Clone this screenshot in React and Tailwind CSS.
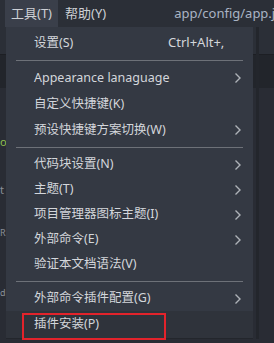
import React from "react";

const font = { fontFamily: '"Noto Sans", "Noto Sans CJK SC", sans-serif' };

function Chevron() {
  return (
    <svg width="8" height="12" viewBox="0 0 8 12" className="absolute right-[11px] top-1/2 -translate-y-1/2">
      <path d="M1.5 1.5 L6 6 L1.5 10.5" fill="none" stroke="#aeb2b8" strokeWidth="1.4" />
    </svg>
  );
}

function Item({ label, shortcut, sub, h = "h-[25px]", extra = "" }) {
  return (
    <div className={`relative flex items-center pl-[28px] pr-[20px] ${h} ${extra}`}>
      <span className="text-[12.5px] text-[#d3d6db] whitespace-nowrap">{label}</span>
      {shortcut && (
        <span className="absolute left-[162px] text-[13px] text-[#d3d6db] whitespace-nowrap">{shortcut}</span>
      )}
      {sub && <Chevron />}
    </div>
  );
}

function Sep() {
  return (
    <div className="flex h-[9px] items-center px-[10px]">
      <div className="h-px w-[227px] bg-[#6d7178]" />
    </div>
  );
}

export default function App() {
  return (
    <div className="relative h-[343px] w-[274px] overflow-hidden bg-[#282b33]" style={font}>
      {/* menubar */}
      <div className="flex h-[27px] items-center overflow-hidden whitespace-nowrap bg-[#2b2f37] text-[13px]">
        <div className="ml-[5px] flex h-full w-[53px] shrink-0 items-center justify-center bg-[#3a3f4a] text-[#cdd0d5]">
          工具(T)
        </div>
        <div className="ml-[7px] shrink-0 text-[#cdd0d5]">帮助(Y)</div>
        <div className="ml-[68px] shrink-0 text-[#a9b4c4]">app/config/app.js</div>
      </div>
      {/* editor background */}
      <div className="flex flex-col">
        <div className="h-[27px] bg-[#2b2f37]" />
        <div className="h-px bg-[#1d1f24]" />
        <div className="h-[33px] bg-[#22252b]" />
        <div className="relative h-[255px] bg-[#292c34]">
          <span className="absolute left-0 top-[48px] text-[11px] leading-none text-[#8fbf4f]">o</span>
          <span className="absolute left-0 top-[96px] text-[11px] leading-none text-[#8a8f98]">t</span>
          <span className="absolute left-0 top-[140px] text-[9px] leading-none text-[#8a8f98]">R</span>
          <span className="absolute left-0 top-[200px] text-[9px] leading-none text-[#8a8f98]">d</span>
        </div>
      </div>
      {/* dropdown menu */}
      <div className="absolute left-[6px] top-[27px] w-[250px] pr-[3px] shadow-[3px_0_0_#23262c]">
        <div className="bg-[#343943] pt-[3px]">
          <Item label="设置(S)" shortcut="Ctrl+Alt+," h="h-[26px]" />
          <Sep />
          <Item label="Appearance lanaguage" sub h="h-[26px]" />
          <Item label="自定义快捷键(K)" h="h-[26px]" />
          <Item label="预设快捷键方案切换(W)" sub h="h-[26px]" />
          <Sep />
          <Item label="代码块设置(N)" sub />
          <Item label="主题(T)" sub />
          <Item label="项目管理器图标主题(I)" sub />
          <Item label="外部命令(E)" sub />
          <Item label="验证本文档语法(V)" />
          <Sep />
          <Item label="外部命令插件配置(G)" sub />
          <Item label="插件安装(P)" h="h-[27px]" extra="bg-[#2f333b]" />
        </div>
        <div className="h-px bg-[#23262c]" />
      </div>
      {/* red highlight */}
      <div className="absolute left-[22px] top-[313px] h-[27px] w-[144px] border-2 border-[#e3232b]" />
    </div>
  );
}
